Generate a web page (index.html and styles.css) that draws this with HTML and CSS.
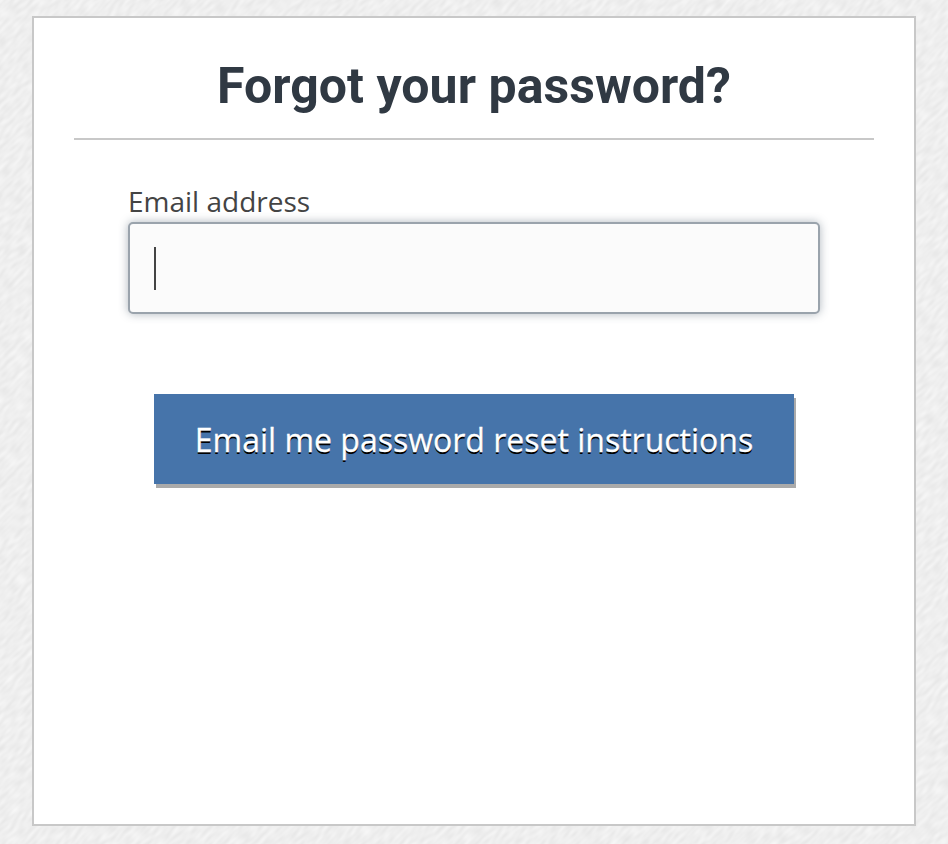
FILE: index.html
```html
<!DOCTYPE html>
<html lang="en">
  <head>
    <meta charset="UTF-8" />
    <meta name="viewport" content="width=device-width, initial-scale=1.0" />
    <title>Forgot your password?</title>
    <link rel="stylesheet" href="styles.css">
  </head>
  <body>
    <main class="container">
      <h1 class="title">Forgot your password?</h1>

      <form class="reset-form">
        <label for="email">Email address</label>
        <div class="field">
          <input type="email" id="email" name="email" />
          <span class="caret"></span>
        </div>

        <button type="submit" class="submit">Email me password reset instructions</button>
      </form>
    </main>
  </body>
</html>
```
FILE: styles.css
```css
* {
  box-sizing: border-box;
  margin: 0;
  padding: 0;
}

body {
  min-height: 100vh;
  padding: 16px 32px 18px;
  font-family: "Open Sans", "Noto Sans", sans-serif;
  color: #444;
  background-color: #eee;
  /* Diagonal paper grain */
  background-image: url("data:image/svg+xml,%3Csvg xmlns='http://www.w3.org/2000/svg' width='948' height='844'%3E%3Cfilter id='n' x='0' y='0' width='100%25' height='100%25' color-interpolation-filters='sRGB'%3E%3CfeTurbulence type='fractalNoise' baseFrequency='.09 .28' numOctaves='1' seed='4'/%3E%3CfeColorMatrix values='.1 0 0 0 .885 .1 0 0 0 .885 .1 0 0 0 .885 0 0 0 0 1'/%3E%3C/filter%3E%3Crect x='-700' y='-100' width='1500' height='1500' transform='rotate(-45)' filter='url(%23n)'/%3E%3C/svg%3E");
}

.container {
  height: 810px;
  padding: 0 40px;
  background-color: #fff;
  border: 2px solid #c8c8c8;
}

.title {
  height: 122px;
  padding-top: 35px;
  border-bottom: 2px solid #c8c8c8;
  font-family: Roboto, sans-serif;
  font-size: 50px;
  font-weight: 700;
  line-height: 66px;
  letter-spacing: 0.04px;
  text-align: center;
  white-space: nowrap;
  color: #303943;
}

.reset-form {
  display: flex;
  flex-direction: column;
  padding: 42px 54px 0;
}

label {
  margin-bottom: 2px;
  font-size: 28px;
  line-height: 38px;
}

.field {
  position: relative;
  height: 92px;
}

.field input {
  display: block;
  width: 100%;
  height: 100%;
  padding: 0 24px;
  font: inherit;
  font-size: 32px;
  color: #444;
  background-color: #fbfbfb;
  border: 2px solid #9aa3ac;
  border-radius: 5px;
  outline: none;
  box-shadow: 0 0 10px rgba(48, 67, 85, 0.38);
}

.caret {
  position: absolute;
  top: 25px;
  left: 26px;
  width: 2px;
  height: 43px;
  background-color: #444;
}

.submit {
  align-self: center;
  width: 640px;
  height: 90px;
  margin-top: 80px;
  border: none;
  font: inherit;
  font-size: 32px;
  white-space: nowrap;
  color: #fff;
  -webkit-text-stroke: 0.3px #fff;
  text-shadow: 0 2px 0 #000;
  background-color: #4674aa;
  box-shadow: 2px 4px 0 #aaa;
}
```
